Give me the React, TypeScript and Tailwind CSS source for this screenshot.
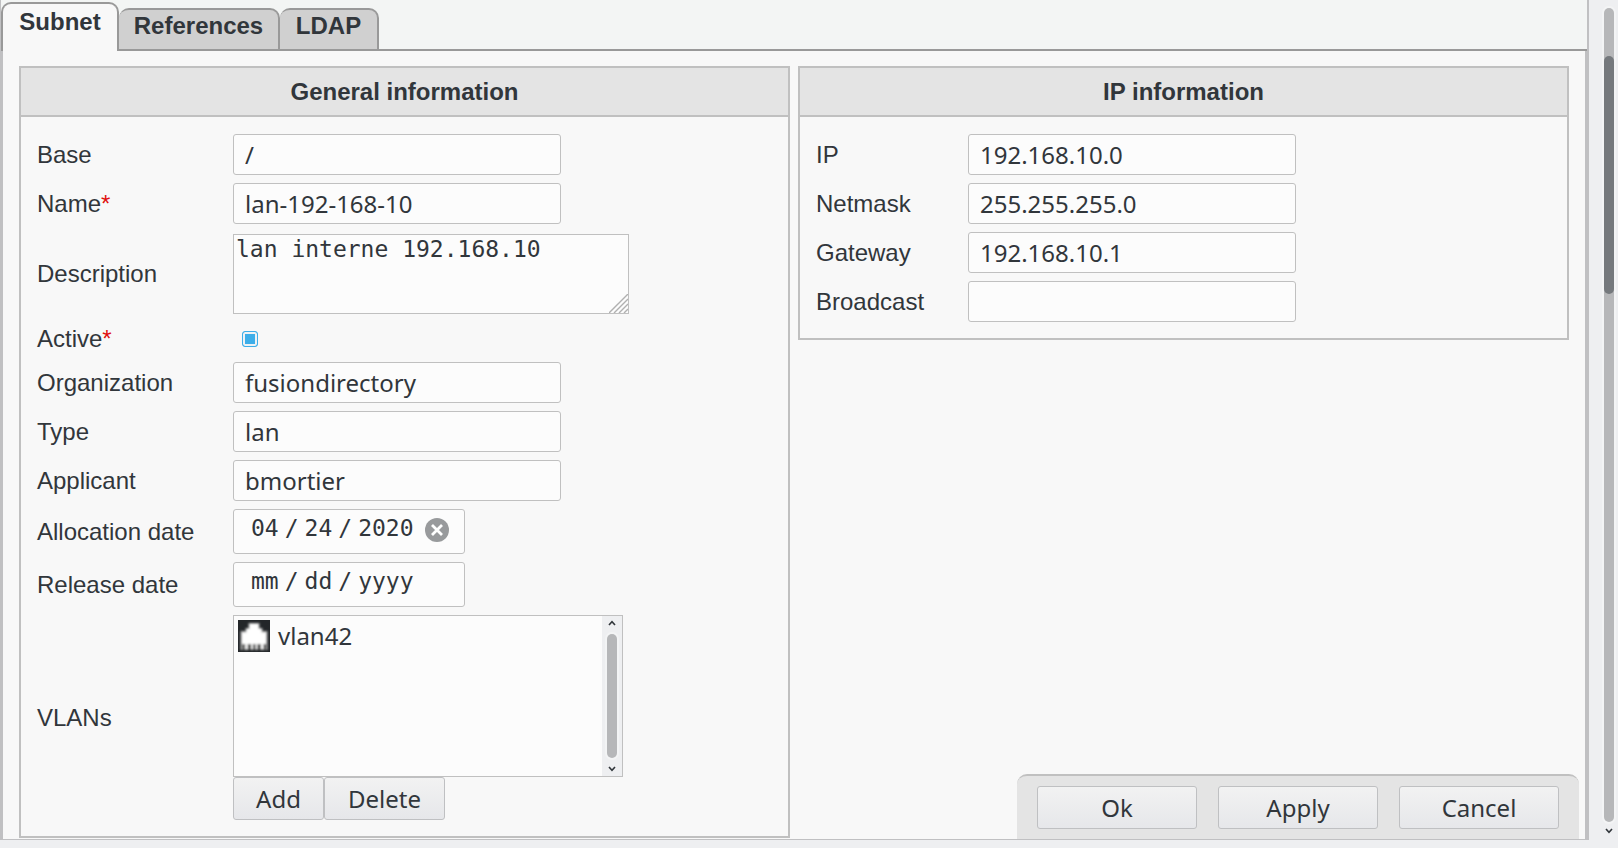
import { ReactNode } from "react";

const sans = "font-['Liberation_Sans',Arial,sans-serif]";
const noto = "font-['Noto_Sans',sans-serif]";
const mono = "font-['DejaVu_Sans_Mono',monospace]";

function Card({ title, children }: { title: string; children: ReactNode }) {
  return (
    <section className="min-w-0 flex-1 border-2 border-[#c0c0c0]">
      <h2 className="border-b-2 border-[#c0c0c0] bg-[#e4e4e4] pt-2 pb-[7px] text-center text-2xl leading-8 font-bold">
        {title}
      </h2>
      <div className="px-4 pt-[13px] pb-3">{children}</div>
    </section>
  );
}

type RowProps = {
  label: string;
  id: string;
  required?: boolean;
  narrow?: boolean;
  className?: string;
  children: ReactNode;
};

function Row({ label, id, required, narrow, className = "py-1", children }: RowProps) {
  return (
    <div className={`flex items-center ${className}`}>
      <label htmlFor={id} className={narrow ? "w-[152px] shrink-0" : "w-[196px] shrink-0"}>
        {label}
        {required && <span className="text-[#e01010]">*</span>}
      </label>
      {children}
    </div>
  );
}

function TextRow({ label, id, value, required, narrow }: { label: string; id: string; value: string; required?: boolean; narrow?: boolean }) {
  return (
    <Row label={label} id={id} required={required} narrow={narrow}>
      <input
        id={id}
        type="text"
        defaultValue={value}
        className={`h-[41px] w-[328px] rounded-[3px] border border-[#c0c0c0] bg-[#fcfcfc] px-[11px] text-2xl outline-none ${noto}`}
      />
    </Row>
  );
}

function DateRow({ label, id, value }: { label: string; id: string; value?: string }) {
  return (
    <Row label={label} id={id}>
      <div className="flex h-[45px] w-[232px] items-start rounded-[3px] border border-[#c0c0c0] bg-[#fcfcfc] pl-4">
        <input
          id={id}
          type="date"
          defaultValue={value}
          className={`h-9 w-[166px] text-[23px] leading-8 outline-none [&::-webkit-calendar-picker-indicator]:hidden [&::-webkit-datetime-edit-text]:px-[5px] ${mono}`}
        />
        {value && (
          <button type="button" aria-label={`Clear ${label.toLowerCase()}`} className="mt-2 ml-[9px]">
            <svg width="24" height="24" viewBox="0 0 24 24">
              <circle cx="12" cy="12" r="12" fill="#989a9c" />
              <path d="M7 7l10 10M17 7L7 17" stroke="#fff" strokeWidth="2.8" />
            </svg>
          </button>
        )}
      </div>
    </Row>
  );
}

function Chevron({ up }: { up?: boolean }) {
  return (
    <svg width="8" height="6" viewBox="0 0 8 6" fill="none" stroke="#31363b" strokeWidth="1.6">
      <path d={up ? "M1 5l3-3.4L7 5" : "M1 1l3 3.4L7 1"} />
    </svg>
  );
}

function PortIcon() {
  return (
    <svg width="32" height="32" viewBox="0 0 32 32">
      <defs>
        <filter id="soft" x="-10%" y="-10%" width="120%" height="120%">
          <feGaussianBlur stdDeviation="0.8" />
        </filter>
      </defs>
      <rect width="32" height="32" fill="#232629" />
      <g filter="url(#soft)">
        <path d="M10.5 3h11v5h3v3h5v19h-27V11h5V8h3z" fill="#aaa" />
        <path d="M11.5 4h9v5h3v3.500h4.500V24h-24V12.500h4.500V9h3z" fill="#fff" />
        <path d="M10 24h3v6h-3zM15 24h2.500v6H15zM19.500 24h3v6h-3zM4.500 24h2v6h-2zM26 24h2v6h-2z" fill="#333" />
        <path d="M7.500 24h2v5h-2zM13.200 24h1.600v5h-1.600zM17.700 24h1.600v5h-1.600zM23 24h2v5h-2z" fill="#fff" />
      </g>
    </svg>
  );
}

const buttonLook = "h-[43px] rounded-[3px] border border-[#bfc0c2] bg-linear-to-b from-[#f2f2f2] to-[#e6e7ea] text-2xl";
const tabLook = "h-[43px] rounded-tr-[10px] rounded-tl-[10px] border-t-2 border-r-2 border-b-2 border-[#999] bg-[#d0d0d0] pb-2 leading-[30px]";

export default function App() {
  return (
    <div className={`flex min-h-screen items-start bg-[#eeeff1] text-2xl leading-7 text-[#31363b] ${sans}`}>
      <main className="relative min-w-0 flex-1 border-r-2 border-b border-l border-[#c0c0c2] bg-[#f3f5f4]">
        <nav className="flex h-[51px] items-end font-bold">
          <button type="button" className="h-[49px] w-[118px] rounded-t-[10px] border-x-2 border-t-2 border-[#999] bg-[#f8f8f8] pb-3 leading-[34px]">
            Subnet
          </button>
          <button type="button" className={`w-[161px] ${tabLook}`}>References</button>
          <button type="button" className={`w-[99px] ${tabLook}`}>LDAP</button>
          <div className="flex-1 border-b-2 border-[#999]" />
        </nav>

        <form className="flex items-start gap-2 border-x-2 border-[#c0c0c2] bg-[#f8f8f8] px-4 pt-[15px] pb-px" onSubmit={(e) => e.preventDefault()}>
          <Card title="General information">
            <TextRow label="Base" id="base" value="/" />
            <TextRow label="Name" id="name" value="lan-192-168-10" required />
            <Row label="Description" id="description" className="pt-[6px] pb-1">
              <div className="relative h-20 w-[396px]">
                <textarea
                  id="description"
                  defaultValue="lan interne 192.168.10"
                  className={`h-full w-full resize-none border border-[#c0c0c0] bg-[#fcfcfc] px-[2px] text-[23px] leading-7 outline-none ${mono}`}
                />
                <svg className="absolute right-px bottom-px" width="19" height="19" viewBox="0 0 19 19" stroke="#b0b0b0" strokeWidth="1.4">
                  <path d="M0 19L19 0M5 19L19 5M10 19l9-9M15 19l4-4" />
                </svg>
              </div>
            </Row>
            <Row label="Active" id="active" required className="h-10 pt-[2px]">
              <input
                id="active"
                type="checkbox"
                defaultChecked
                className="ml-[9px] size-4 appearance-none rounded-[3px] border border-[#3daee9] bg-[#f8f8f8] checked:bg-[#3daee9] checked:shadow-[inset_0_0_0_2px_#eef2f5]"
              />
            </Row>
            <TextRow label="Organization" id="organization" value="fusiondirectory" />
            <TextRow label="Type" id="type" value="lan" />
            <TextRow label="Applicant" id="applicant" value="bmortier" />
            <DateRow label="Allocation date" id="allocation" value="2020-04-24" />
            <DateRow label="Release date" id="release" />
            <Row label="VLANs" id="vlans">
              <div className={noto}>
                <div className="flex h-[162px] w-[390px] border border-[#c0c0c0] bg-[#fcfcfc]">
                  <ul id="vlans" role="listbox" aria-label="VLANs" className="flex-1 p-1">
                    <li role="option" aria-selected="false" className="flex items-center gap-2 leading-8">
                      <PortIcon />
                      vlan42
                    </li>
                  </ul>
                  <div className="flex w-5 flex-col items-center gap-2 bg-[#eeeff1] py-1">
                    <Chevron up />
                    <div className="w-[10px] flex-1 rounded-full bg-[#b6b7b9] ring-2 ring-[#f3f4f5]" />
                    <Chevron />
                  </div>
                </div>
                <div className="flex">
                  <button type="button" className={`w-[91px] ${buttonLook}`}>Add</button>
                  <button type="button" className={`w-[121px] ${buttonLook}`}>Delete</button>
                </div>
              </div>
            </Row>
          </Card>

          <Card title="IP information">
            <TextRow narrow label="IP" id="ip" value="192.168.10.0" />
            <TextRow narrow label="Netmask" id="netmask" value="255.255.255.0" />
            <TextRow narrow label="Gateway" id="gateway" value="192.168.10.1" />
            <TextRow narrow label="Broadcast" id="broadcast" value="" />
          </Card>
        </form>

        <footer className={`absolute right-2 bottom-0 flex gap-[21px] rounded-t-[10px] border-t-2 border-[#c0c0c0] bg-[#e4e4e4] px-5 pt-[10px] pb-[10px] ${noto}`}>
          <button type="button" className={`w-40 ${buttonLook}`}>Ok</button>
          <button type="button" className={`w-40 ${buttonLook}`}>Apply</button>
          <button type="button" className={`w-40 ${buttonLook}`}>Cancel</button>
        </footer>
      </main>

      <div className="flex w-[29px] flex-col items-center gap-[6px] self-stretch bg-[#eeeff1] pt-2 pb-[14px] pl-[10px]">
        <div className="w-[10px] flex-1 rounded-full bg-[#b6b7b9] pt-12 ring-2 ring-[#f3f4f5]">
          <div className="h-[238px] rounded-full bg-[#75797d]" />
        </div>
        <Chevron />
      </div>
    </div>
  );
}
